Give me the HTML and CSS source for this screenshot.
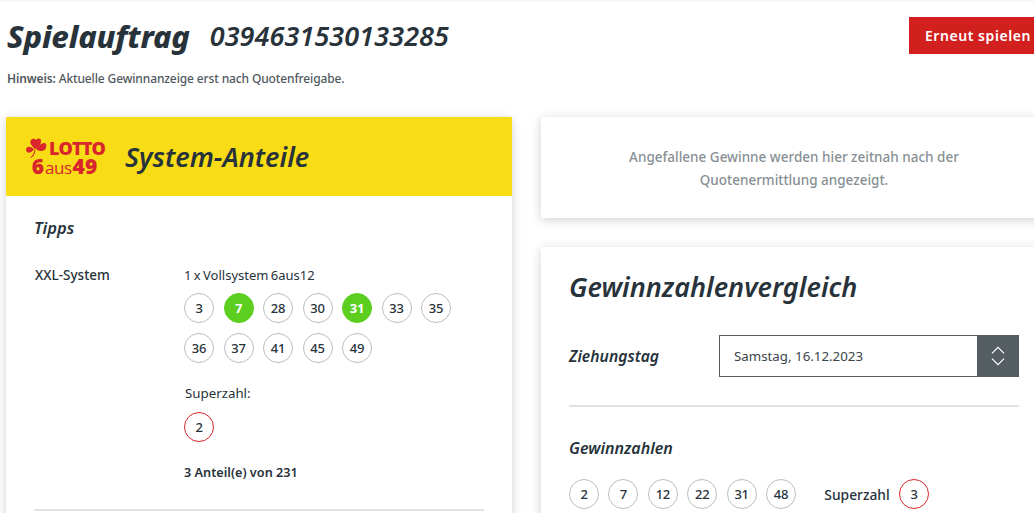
FILE: index.html
```html
<!DOCTYPE html>
<html lang="de">
<head>
  <meta charset="UTF-8">
  <meta name="viewport" content="width=device-width, initial-scale=1.0">
  <title>Spielauftrag</title>
  <link rel="stylesheet" href="styles.css">
</head>
<body>
  <div class="page">
    <div class="head">
      <h1 class="title">Spielauftrag</h1>
      <span class="order-number">0394631530133285</span>
      <a class="replay" href="#">Erneut spielen</a>
    </div>
    <p class="hint"><strong>Hinweis:</strong> Aktuelle Gewinnanzeige erst nach Quotenfreigabe.</p>

    <div class="columns">
      <div class="card ticket">
        <div class="ticket-head">
          <div class="logo">
            <div class="logo-top">
              <svg class="clover" width="21" height="20" viewBox="0 0 21 20">
                <g fill="#d9262c">
                  <path d="M9 11C6 8 3 5 5 2c2-2 4-1 5 0 2-2 5-2 5 1 0 4-3 7-6 8z"/>
                  <path d="M10 11c2-2 5-6 8-6 2 0 3 2 2 4 0 3-3 4-5 4s-4-1-5-2z"/>
                  <path d="M8 11.500C6 9 3 8 1 9.500c-1.500 1.500-1 3.500 0 4.500 2 2 5 0 7-2.500z"/>
                  <path d="M8.600 11.500C8 15 7 17 4.500 19.500l.7.500c2.800-2 4.200-5 4.200-8.500z"/>
                </g>
              </svg>
              <span class="logo-lotto">LOTTO</span>
            </div>
            <div class="logo-bottom"><b>6</b><span>aus</span><b>49</b></div>
          </div>
          <h2 class="ticket-title">System-Anteile</h2>
        </div>
        <div class="ticket-body">
          <h3 class="sub tipps">Tipps</h3>
          <div class="tip-row">
            <div class="tip-name">XXL-System</div>
            <div class="tip-data">
              <div class="tip-type">1 x Vollsystem 6aus12</div>
              <div class="balls">
                <span class="ball">3</span>
                <span class="ball hit">7</span>
                <span class="ball">28</span>
                <span class="ball">30</span>
                <span class="ball hit">31</span>
                <span class="ball">33</span>
                <span class="ball">35</span>
                <span class="ball">36</span>
                <span class="ball">37</span>
                <span class="ball">41</span>
                <span class="ball">45</span>
                <span class="ball">49</span>
              </div>
              <div class="super-label">Superzahl:</div>
              <span class="ball red">2</span>
              <div class="shares">3 Anteil(e) von 231</div>
            </div>
          </div>
          <hr class="line">
        </div>
      </div>

      <div class="side">
        <div class="card notice">Angefallene Gewinne werden hier zeitnah nach der<br>Quotenermittlung angezeigt.</div>
        <div class="card compare">
          <h2 class="compare-title">Gewinnzahlenvergleich</h2>
          <div class="draw-row">
            <span class="draw-label">Ziehungstag</span>
            <div class="select">
              <span class="select-value">Samstag, 16.12.2023</span>
              <span class="select-btn">
                <svg width="14" height="24" viewBox="0 0 14 24" fill="none" stroke="#fff" stroke-width="1.2">
                  <path d="M1 9.300L7 3.300 13 9.300M1 14.700L7 20.700 13 14.700"/>
                </svg>
              </span>
            </div>
          </div>
          <hr class="line">
          <h3 class="sub winning">Gewinnzahlen</h3>
          <div class="winning-row">
            <span class="ball">2</span>
            <span class="ball">7</span>
            <span class="ball">12</span>
            <span class="ball">22</span>
            <span class="ball">31</span>
            <span class="ball">48</span>
            <span class="winning-super">Superzahl</span>
            <span class="ball red">3</span>
          </div>
        </div>
      </div>
    </div>
  </div>
</body>
</html>
```

FILE: styles.css
```css
html, body {
    margin: 0;
    padding: 0;
    height: 100%;
    overflow: hidden;
    background: #fff;
}
body {
    font-family: "Noto Sans", sans-serif;
    font-size: 14px;
    color: #27323a;
}
.page {
    height: 513px;
    overflow: hidden;
    padding-left: 6px;
    box-shadow: inset 0 2px 2px -1px #f0f0f0;
}
.head {
    display: flex;
    align-items: center;
    padding: 17px 0 0 1px;
    height: 37px;
}
.title {
    margin: 0;
    font-size: 31px;
    font-weight: 800;
    font-style: italic;
    letter-spacing: -0.2px;
}
.order-number {
    margin-left: 20px;
    font-size: 27px;
    font-weight: 600;
    font-style: italic;
    letter-spacing: 0.08px;
}
.replay {
    margin-left: auto;
    width: 125px;
    height: 37px;
    line-height: 37px;
    padding-left: 16px;
    box-sizing: border-box;
    background: #d2201f;
    color: #fff;
    font-size: 14px;
    font-weight: 600;
    letter-spacing: 0.55px;
    text-decoration: none;
    white-space: nowrap;
}
.hint {
    margin: 17px 0 0;
    padding-left: 1px;
    font-size: 12px;
    line-height: 16px;
    font-weight: 500;
    letter-spacing: -0.13px;
    color: #50585e;
}
.hint strong {
    font-weight: 600;
}
.columns {
    display: flex;
    gap: 29px;
    margin-top: 30px;
}
.card {
    background: #fff;
    box-shadow: 0 2px 10px rgba(0, 0, 0, 0.18);
}
.ticket {
    width: 506px;
    flex-shrink: 0;
}
.ticket-head {
    display: flex;
    align-items: center;
    height: 79px;
    padding-left: 20px;
    background: #f8dc15;
}
.logo {
    width: 79px;
    color: #d9262c;
}
.logo-top {
    display: flex;
    align-items: center;
    height: 20px;
}
.logo-lotto {
    margin-left: 2px;
    font-size: 18px;
    line-height: 16px;
    font-weight: 800;
    letter-spacing: -0.9px;
    font-family: "Open Sans", sans-serif;
}
.logo-bottom {
    display: flex;
    align-items: baseline;
    justify-content: center;
    gap: 1px;
    height: 18px;
    line-height: 16px;
    padding-right: 2px;
    font-size: 17px;
    font-family: "Open Sans", sans-serif;
}
.logo-bottom span {
    letter-spacing: -0.5px;
}
.logo-bottom b {
    font-size: 21px;
    font-weight: 800;
}
.ticket-title {
    margin: 0 0 0 20px;
    font-size: 27px;
    font-weight: 600;
    font-style: italic;
}
.ticket-body {
    padding: 22px 28px 0;
}
.sub {
    margin: 0;
    font-size: 16px;
    line-height: 20px;
    font-weight: 600;
    font-style: italic;
}
.tipps {
    font-size: 16.500px;
}
.tip-row {
    display: flex;
    margin-top: 27px;
}
.tip-name {
    width: 150px;
    padding-left: 1px;
    box-sizing: border-box;
    font-size: 13.500px;
    font-weight: 500;
    line-height: 20px;
}
.tip-type {
    font-size: 13px;
    line-height: 20px;
    margin-bottom: 8px;
    word-spacing: -1px;
}
.balls {
    display: flex;
    flex-wrap: wrap;
    gap: 10px 9.500px;
    width: 275px;
}
.ball {
    display: flex;
    align-items: center;
    justify-content: center;
    width: 30px;
    height: 30px;
    box-sizing: border-box;
    border: 1px solid #bdbdbd;
    border-radius: 50%;
    font-size: 13px;
    font-weight: 500;
    letter-spacing: -0.3px;
}
.ball.hit {
    background: #5bce1f;
    border-color: #5bce1f;
    color: #fff;
    font-weight: 700;
}
.ball.red {
    border-color: #d9262c;
}
.super-label {
    margin: 20px 0 9px 1px;
    font-size: 13.300px;
    line-height: 20px;
}
.shares {
    margin-top: 20px;
    font-size: 12.700px;
    line-height: 20px;
    font-weight: 600;
}
.line {
    margin: 0;
    border: 0;
    height: 2px;
    background: #e2e2e2;
}
.ticket-body .line {
    margin-top: 27px;
}
.side {
    display: flex;
    flex-direction: column;
    gap: 29px;
    width: 506px;
    flex-shrink: 0;
}
.notice {
    height: 101px;
    box-sizing: border-box;
    padding-top: 29px;
    text-align: center;
    font-size: 13.500px;
    font-weight: 500;
    line-height: 23px;
    color: #878f95;
}
.compare {
    padding: 24px 28px 0;
    width: 450px;
    height: 300px;
}
.compare-title {
    margin: 0;
    font-size: 27px;
    line-height: 32px;
    font-weight: 600;
    font-style: italic;
}
.draw-row {
    display: flex;
    align-items: center;
    margin-top: 32px;
}
.draw-label {
    width: 150px;
    font-size: 15.700px;
    font-weight: 600;
    font-style: italic;
}
.select {
    display: flex;
    width: 300px;
    height: 42px;
    box-sizing: border-box;
    border: 1px solid #555e63;
}
.select-value {
    flex: 1;
    padding-left: 14px;
    line-height: 41px;
    font-size: 13.300px;
    color: #3c454b;
}
.select-btn {
    display: flex;
    align-items: center;
    justify-content: center;
    width: 41px;
    background: #555e63;
}
.compare .line {
    margin-top: 28px;
}
.winning {
    margin-top: 31px;
}
.winning-row {
    display: flex;
    align-items: center;
    gap: 9.400px;
    margin-top: 21px;
}
.winning-super {
    margin-left: 19px;
    font-size: 13.800px;
    font-weight: 500;
}
```
